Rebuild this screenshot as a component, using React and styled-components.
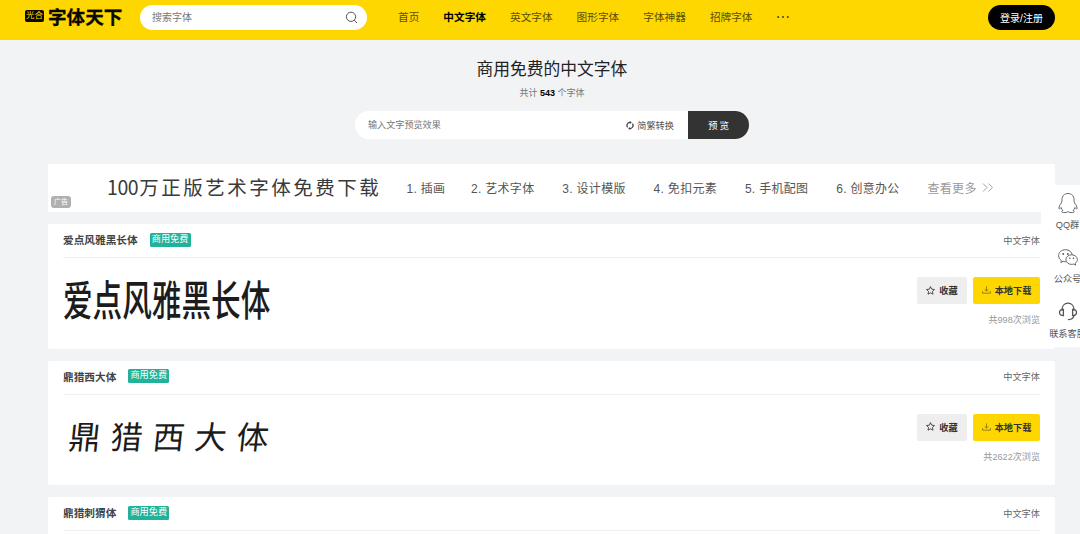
import React from 'react';
import { useState } from 'react'
import styled, { createGlobalStyle } from 'styled-components'

const navItems = ['首页', '中文字体', '英文字体', '图形字体', '字体神器', '招牌字体'];

const adLinks = ['1. 插画', '2. 艺术字体', '3. 设计模版', '4. 免扣元素', '5. 手机配图', '6. 创意办公'];

const fontList = [
    { name: '爱点风雅黑长体', look: 'tall', views: 998 },
    { name: '鼎猎西大体', look: 'brush', views: 2622 },
    { name: '鼎猎刺猬体' },
];

const GlobalStyle = createGlobalStyle`
    * {
        box-sizing: border-box;
    }
    body {
        margin: 0;
        background: #f1f3f5;
        font-family: "Liberation Sans", "Noto Sans CJK SC", sans-serif;
        color: #333;
        overflow: hidden;
    }
    button, input {
        font-family: inherit;
        border: none;
        padding: 0;
        outline: none;
    }
`

const Page = styled.div`
    width: 1080px;
    height: 534px;
    overflow: hidden;
    position: relative;
`

const Header = styled.header`
    height: 40px;
    background: #ffd700;
    display: flex;
    align-items: flex-start;
    padding: 5px 25px 0 25px;
`

const Logo = styled.div`
    display: flex;
    align-items: flex-start;
    width: 115px;
    height: 25px;
    color: #0a0900;
`

const LogoTag = styled.span`
    width: 19px;
    height: 12px;
    margin-top: 5px;
    border-radius: 2px;
    background: #0a0900;
    color: #ffd700;
    font-size: 8.5px;
    line-height: 11px;
    text-align: center;
    white-space: nowrap;
`

const LogoName = styled.span`
    margin-left: 4px;
    font-size: 18.6px;
    line-height: 26px;
    font-weight: 700;
    white-space: nowrap;
    -webkit-text-stroke: 0.3px #0a0900;
`

const SearchBox = styled.div`
    width: 227px;
    height: 25px;
    border-radius: 13px;
    background: #fff;
    display: flex;
    align-items: center;
    padding: 0 9px 0 12px;
    color: #555;
`

const TextInput = styled.input`
    flex: 1;
    min-width: 0;
    height: 20px;
    background: transparent;
    font-size: ${props => props.$size}px;
    color: #333;
    &::placeholder {
        color: #777;
        opacity: 1;
    }
`

const Nav = styled.nav`
    display: flex;
    gap: 24px;
    margin-left: 31px;
    height: 24px;
    align-items: center;
`

const NavItem = styled.a`
    font-size: 10.67px;
    line-height: 16px;
    font-weight: ${props => props.$active ? 700 : 400};
    color: ${props => props.$active ? '#000' : '#5a4d05'};
    white-space: nowrap;
    cursor: pointer;
`

const LoginButton = styled.button`
    width: 67px;
    height: 25px;
    margin-left: auto;
    padding-bottom: 1px;
    border-radius: 13px;
    background: #000;
    color: #fff;
    font-size: 10px;
    white-space: nowrap;
`

const Intro = styled.section`
    display: flex;
    flex-direction: column;
    align-items: center;
    padding-top: 18px;
    padding-left: 24px;
    height: 124px;
`

const Title = styled.h1`
    margin: 0;
    font-size: 16.75px;
    line-height: 24px;
    font-weight: 400;
    color: #222;
`

const Count = styled.p`
    margin: 4px 0 0;
    font-size: 9px;
    line-height: 14px;
    color: #777;
    b {
        color: #000;
    }
`

const PreviewBar = styled.div`
    display: flex;
    width: 394px;
    height: 28px;
    margin-top: 11px;
    border-radius: 14px;
    overflow: hidden;
    background: #fff;
`

const PreviewInput = styled.div`
    flex: 1;
    display: flex;
    align-items: center;
    padding: 0 14px 0 13px;
`

const ConvertButton = styled.span`
    display: flex;
    align-items: center;
    gap: 3px;
    font-size: 9.2px;
    color: #555;
`

const PreviewButton = styled.button`
    width: 61px;
    background: #333;
    color: #fff;
    font-size: 9.5px;
    word-spacing: -0.5px;
`

const Content = styled.main`
    width: 1007px;
    margin-left: 48px;
    display: flex;
    flex-direction: column;
    gap: 12px;
`

const AdBanner = styled.div`
    position: relative;
    height: 48px;
    background: #fff;
    display: flex;
    align-items: center;
    padding-left: 59px;
    padding-bottom: 2px;
    border-radius: 2px;
    white-space: nowrap;
`

const AdBadge = styled.span`
    position: absolute;
    left: 3px;
    bottom: 4px;
    width: 20px;
    height: 12px;
    border-radius: 3px;
    background: #b0b0b0;
    color: #fff;
    font-size: 7px;
    line-height: 12px;
    text-align: center;
`

const AdTitle = styled.span`
    width: 299.5px;
    font-family: "Noto Sans CJK SC", sans-serif;
    font-size: 19.5px;
    line-height: 28px;
    font-weight: 400;
    letter-spacing: 2.5px;
    color: #3a3a3a;
    padding-bottom: 1px;
    span {
        letter-spacing: -0.4px;
        margin-right: 1px;
    }
`

const AdLink = styled.a`
    width: ${props => props.$first ? 64.5 : 91.3}px;
    font-size: 12px;
    letter-spacing: 0.3px;
    color: #555;
`

const AdMore = styled.a`
    display: flex;
    align-items: center;
    gap: 5px;
    font-size: 12px;
    letter-spacing: 0.3px;
    color: #999;
`

const Card = styled.article`
    height: 124.6px;
    background: #fff;
    border-radius: 2px;
    padding: 0 15px;
`

const CardHead = styled.div`
    height: 34px;
    display: flex;
    align-items: center;
    padding-bottom: 2px;
    border-bottom: 1px solid #f0f0f0;
`

const FontName = styled.h2`
    margin: 0;
    font-size: 10.67px;
    font-weight: 700;
    color: #444;
`

const FreeTag = styled.span`
    width: 41px;
    height: 14px;
    margin-left: 12px;
    border-radius: 1.5px;
    background: #22b299;
    color: #fff;
    font-size: 9.2px;
    line-height: 13.5px;
    text-align: center;
    white-space: nowrap;
`

const Category = styled.span`
    margin-left: auto;
    font-size: 9.2px;
    color: #666;
`

const CardBody = styled.div`
    display: flex;
    justify-content: space-between;
    height: 90px;
`

const Sample = styled.div`
    height: 80px;
    line-height: 80px;
    white-space: nowrap;
    transform-origin: 0 50%;
    font-family: "Noto Sans CJK SC", sans-serif;
    font-size: ${props => props.$look === 'tall' ? 42 : 32}px;
    font-weight: ${props => props.$look === 'tall' ? 500 : 400};
    letter-spacing: ${props => props.$look === 'tall' ? 0 : 10}px;
    padding-left: ${props => props.$look === 'tall' ? 0 : 6}px;
    transform: ${props => props.$look === 'tall' ? 'scaleX(0.705)' : 'skewX(-6deg)'};
    color: #1c1c1c;
`

const Actions = styled.div`
    display: flex;
    flex-direction: column;
    align-items: flex-end;
    padding-top: 19px;
`

const ButtonRow = styled.div`
    display: flex;
    gap: 6px;
`

const ActionButton = styled.button`
    display: flex;
    align-items: center;
    justify-content: center;
    gap: 4px;
    width: ${props => props.$primary ? 67 : 50}px;
    height: 27px;
    padding-bottom: 1px;
    border-radius: 2px;
    background: ${props => props.$primary ? '#ffd700' : '#eee'};
    color: #333;
    font-size: 9.2px;
    font-weight: 700;
    white-space: nowrap;
`

const Views = styled.span`
    margin-top: 9px;
    font-size: 9.1px;
    line-height: 14px;
    color: #999;
`

// fixed side bar, it runs off the right edge of the window
const SideBar = styled.aside`
    position: absolute;
    top: 185px;
    left: 1041px;
    width: 53px;
    height: 162px;
    background: #fff;
    border-radius: 2px;
    padding-top: 7px;
`

const SideItem = styled.div`
    height: 54.5px;
    display: flex;
    flex-direction: column;
    align-items: center;
    gap: 4.5px;
    font-size: 9.2px;
    line-height: 13px;
    color: #555;
    white-space: nowrap;
    svg {
        flex: none;
    }
`

const SearchIcon = () => (
    <svg width="13" height="13" viewBox="0 0 13 13" fill="none" stroke="#555" strokeWidth="1">
        <circle cx="6" cy="5.8" r="4.6" />
        <path d="M9.3 9.2 L12 12" />
    </svg>
)

const DotsIcon = () => (
    <svg width="12" height="4" viewBox="0 0 12 4" fill="#4a4005">
        <circle cx="1.2" cy="2" r="1" />
        <circle cx="6" cy="2" r="1" />
        <circle cx="10.8" cy="2" r="1" />
    </svg>
)

const ConvertIcon = () => (
    <svg width="8" height="9" viewBox="0 0 8 9" fill="none" stroke="#444" strokeWidth="1.3">
        <path d="M1.6 6.3 A3 3 0 0 1 4.4 1.5" />
        <path d="M6.4 2.7 A3 3 0 0 1 3.6 7.5" />
        <path d="M3.8 0 L5.8 1.5 L3.8 3 Z" fill="#444" stroke="none" />
        <path d="M4.2 6 L2.2 7.5 L4.2 9 Z" fill="#444" stroke="none" />
    </svg>
)

const MoreIcon = () => (
    <svg width="12" height="9" viewBox="0 0 12 9" fill="none" stroke="#999" strokeWidth="0.9">
        <path d="M1 0.5 L5 4.5 L1 8.5 M6.5 0.5 L10.5 4.5 L6.5 8.5" />
    </svg>
)

const StarIcon = () => (
    <svg width="9" height="9" viewBox="0 0 18 18" fill="none" stroke="#333" strokeWidth="1.7" strokeLinejoin="round">
        <path d="M9 1.2 L11.4 6.3 L17 7 L12.9 10.8 L14 16.4 L9 13.7 L4 16.4 L5.1 10.8 L1 7 L6.6 6.3 Z" />
    </svg>
)

const DownloadIcon = () => (
    <svg width="9" height="8" viewBox="0 0 9 8" fill="none" stroke="#7d6d1a" strokeWidth="0.8">
        <path d="M4.5 0.4 V5 M2.6 3.3 L4.5 5.2 L6.4 3.3 M0.6 5 V7.2 H8.4 V5" />
    </svg>
)

const QQIcon = () => (
    <svg width="20" height="22" viewBox="0 0 20 22" fill="none" stroke="#666" strokeWidth="1" strokeLinejoin="round">
        <path d="M10 1.5 C6.2 1.5 4 4.2 4 7.4 V9.3 C3.5 9.8 3.3 10.4 3.4 11 C1.8 12.8 .8 14.8 1 16.4 C1.2 17.5 2.3 16.6 3.1 15.5 C3.4 16.7 4 17.7 4.9 18.4 C3.4 18.9 3.4 20.5 5.5 20.6 C7.5 20.8 9.2 20.3 10 19.5 C10.8 20.3 12.5 20.8 14.5 20.6 C16.6 20.5 16.6 18.9 15.1 18.4 C16 17.7 16.6 16.7 16.9 15.5 C17.7 16.6 18.8 17.5 19 16.4 C19.2 14.8 18.2 12.8 16.6 11 C16.7 10.4 16.5 9.8 16 9.3 V7.4 C16 4.2 13.8 1.5 10 1.5 Z" />
    </svg>
)

const WechatIcon = () => (
    <svg width="20" height="22" viewBox="0 0 20 22" fill="none" stroke="#666" strokeWidth="1" strokeLinejoin="round">
        <path d="M8 14.7 C7 14.8 6 14.6 5.1 14.3 L2.9 15.6 L3.3 13.4 C1.6 12.2 .6 10.5 .6 8.7 C.6 5.3 3.7 2.7 7.5 2.7 C11 2.7 13.7 4.8 14.2 7.7" />
        <path d="M13.6 7.8 C10.4 7.8 7.9 9.9 7.9 12.6 C7.9 15.3 10.4 17.4 13.6 17.4 C14.4 17.4 15.1 17.3 15.7 17 L17.6 18.1 L17.3 16.2 C18.6 15.3 19.4 14 19.4 12.6 C19.4 9.9 16.8 7.8 13.6 7.8 Z" />
        <g fill="#555" stroke="none">
            <circle cx="5.2" cy="7" r=".9" />
            <circle cx="9.8" cy="7" r=".9" />
            <circle cx="11.8" cy="11.2" r=".8" />
            <circle cx="15.5" cy="11.2" r=".8" />
        </g>
    </svg>
)

const HeadsetIcon = () => (
    <svg width="20" height="22" viewBox="0 0 20 22" fill="none" stroke="#555" strokeWidth="1.3" strokeLinecap="round">
        <path d="M4 9 C4 5 6.4 2.2 10 2.2 C13.6 2.2 16 5 16 9" />
        <path d="M5.4 8.3 V14.6 C3 14.6 1.5 13.5 1.5 11.5 C1.5 9.5 3 8.3 5.4 8.3 Z" />
        <path d="M14.6 8.3 V14.6 C17 14.6 18.5 13.5 18.5 11.5 C18.5 9.5 17 8.3 14.6 8.3 Z" />
        <path d="M16 14.5 C15.6 17 13.8 18.5 10.5 18.7" />
    </svg>
)

const FontCard = ({ font }) => {
    const [liked, setLiked] = useState(false);

    return (
        <Card>
            <CardHead>
                <FontName>{font.name}</FontName>
                <FreeTag>商用免费</FreeTag>
                <Category>中文字体</Category>
            </CardHead>
            {font.look && (
                <CardBody>
                    <Sample $look={font.look}>{font.name}</Sample>
                    <Actions>
                        <ButtonRow>
                            <ActionButton onClick={() => setLiked(!liked)}><StarIcon />收藏</ActionButton>
                            <ActionButton $primary><DownloadIcon />本地下载</ActionButton>
                        </ButtonRow>
                        <Views>共{font.views}次浏览</Views>
                    </Actions>
                </CardBody>
            )}
        </Card>
    );
}

export default function App() {
    const [active, setActive] = useState(1);

    return (
        <Page>
            <GlobalStyle />
            <Header>
                <Logo>
                    <LogoTag>光合</LogoTag>
                    <LogoName>字体天下</LogoName>
                </Logo>
                <SearchBox>
                    <TextInput $size={10} placeholder="搜索字体" />
                    <SearchIcon />
                </SearchBox>
                <Nav>
                    {navItems.map((item, index) => (
                        <NavItem key={item} $active={index === active} onClick={() => setActive(index)}>{item}</NavItem>
                    ))}
                    <DotsIcon />
                </Nav>
                <LoginButton>登录/注册</LoginButton>
            </Header>
            <Intro>
                <Title>商用免费的中文字体</Title>
                <Count>共计 <b>543</b> 个字体</Count>
                <PreviewBar>
                    <PreviewInput>
                        <TextInput $size={9.1} placeholder="输入文字预览效果" />
                        <ConvertButton><ConvertIcon />简繁转换</ConvertButton>
                    </PreviewInput>
                    <PreviewButton>预 览</PreviewButton>
                </PreviewBar>
            </Intro>
            <Content>
                <AdBanner>
                    <AdTitle><span>100</span>万正版艺术字体免费下载</AdTitle>
                    {adLinks.map((link, index) => (
                        <AdLink key={link} $first={index === 0}>{link}</AdLink>
                    ))}
                    <AdMore>查看更多<MoreIcon /></AdMore>
                    <AdBadge>广告</AdBadge>
                </AdBanner>
                {fontList.map(font => <FontCard key={font.name} font={font} />)}
            </Content>
            <SideBar>
                <SideItem><QQIcon />QQ群</SideItem>
                <SideItem><WechatIcon />公众号</SideItem>
                <SideItem><HeadsetIcon />联系客服</SideItem>
            </SideBar>
        </Page>
    );
}
